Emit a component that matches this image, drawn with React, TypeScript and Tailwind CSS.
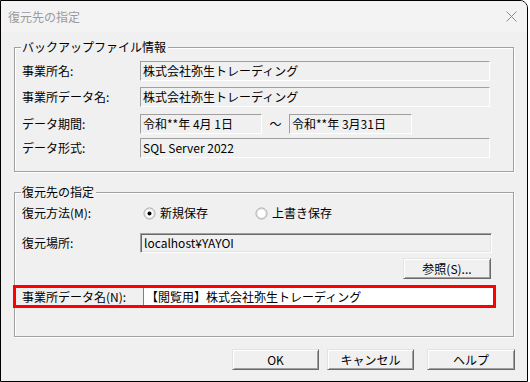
import React from 'react';

const sunkenThin =
  'bg-[#f0f0f0] border border-t-[#a0a0a0] border-l-[#a0a0a0] border-b-white border-r-white';

const ReadBox: React.FC<{ text: string; w: string }> = ({ text, w }) => (
  <div className={`${w} h-[20px] flex items-center pl-[2px] whitespace-nowrap ${sunkenThin}`}>{text}</div>
);

const Radio: React.FC<{ on?: boolean }> = ({ on }) => (
  <svg width="13" height="13" viewBox="0 0 13 13">
    <circle cx="6.5" cy="6.5" r="5.5" fill="#f7f7f7" stroke="#a0a0a0" />
    <circle cx="6.5" cy="6.5" r="4.5" fill="#fff" stroke="#e0e0e0" />
    {on && <circle cx="6.5" cy="6.5" r="2" fill="#000" />}
  </svg>
);

const Btn: React.FC<{ label: string; w: string }> = ({ label, w }) => (
  <button
    className={`${w} h-[21px] flex items-center justify-center bg-[#f0f0f0] border border-t-[#e3e3e3] border-l-[#e3e3e3] border-r-[#696969] border-b-[#696969] shadow-[inset_1px_1px_0_#fff,inset_-1px_-1px_0_#a0a0a0]`}
  >
    {label}
  </button>
);

const Row: React.FC<{ label: string; mt: string; children: React.ReactNode }> = ({ label, mt, children }) => (
  <div className={`flex items-center pl-[7px] ${mt}`}>
    <span className="w-[118px] whitespace-nowrap">{label}</span>
    {children}
  </div>
);

export default function App() {
  return (
    <div className="w-[530px] h-[382px] bg-white font-['MS_UI_Gothic','Noto_Sans_CJK_JP',sans-serif] text-[12px] leading-[14px] text-black">
      <div className="w-[528px] h-[382px] flex flex-col border border-black rounded-tr-[8px] bg-[#f0f0f0] overflow-hidden">
        {/* title bar */}
        <div className="h-[31px] flex items-center justify-between pl-[7px] pr-[10px] bg-[#f3f3f3]">
          <span className="text-[#9a9a9a]">復元先の指定</span>
          <svg width="11" height="11" viewBox="0 0 11 11">
            <path d="M0.5 0.5 L10.5 10.5 M10.5 0.5 L0.5 10.5" stroke="#8c8c8c" strokeWidth="1" />
          </svg>
        </div>

        {/* backup file info */}
        <fieldset className="mx-[13px] mt-[7px] pb-[13px] border border-[#a0a0a0] shadow-[inset_1px_1px_0_#fff,1px_1px_0_#fff]">
          <legend className="ml-[6px] pl-[1px] pr-[2px] leading-[16px] bg-[#f0f0f0]">バックアップファイル情報</legend>
          <Row label="事業所名:" mt="mt-[6px]">
            <ReadBox w="w-[350px]" text="株式会社弥生トレーディング" />
          </Row>
          <Row label="事業所データ名:" mt="mt-[6px]">
            <ReadBox w="w-[350px]" text="株式会社弥生トレーディング" />
          </Row>
          <Row label="データ期間:" mt="mt-[7px]">
            <ReadBox w="w-[122px]" text="令和**年 4月 1日" />
            <span className="w-[27px] text-center">～</span>
            <ReadBox w="w-[123px]" text="令和**年 3月31日" />
          </Row>
          <Row label="データ形式:" mt="mt-[4px]">
            <ReadBox w="w-[350px]" text="SQL Server 2022" />
          </Row>
        </fieldset>

        {/* restore target */}
        <fieldset className="mx-[13px] mt-[12px] pb-[28px] border border-[#a0a0a0] shadow-[inset_1px_1px_0_#fff,1px_1px_0_#fff]">
          <legend className="ml-[6px] pl-[1px] pr-[2px] leading-[16px] bg-[#f0f0f0]">復元先の指定</legend>
          <Row label="復元方法(M):" mt="mt-[3px]">
            <div className="h-[20px] w-[112px] ml-[3px] flex items-center gap-[4px]">
              <Radio on />
              <span>新規保存</span>
            </div>
            <div className="h-[20px] flex items-center gap-[4px]">
              <Radio />
              <span>上書き保存</span>
            </div>
          </Row>
          <Row label="復元場所:" mt="mt-[10px]">
            <div className="w-[352px] h-[20px] flex items-center pl-[3px] bg-[#f0f0f0] border border-t-[#a0a0a0] border-l-[#a0a0a0] border-b-white border-r-white shadow-[inset_1px_1px_0_#696969,inset_-1px_-1px_0_#e3e3e3]">
              localhost¥YAYOI
            </div>
          </Row>
          <div className="flex justify-end pr-[22px] mt-[5px]">
            <Btn w="w-[88px]" label="参照(S)..." />
          </div>
          <div className="-ml-[2px] mt-[6px] w-[483px] h-[23px] flex border-[3px] border-[#ff0000]">
            <span className="w-[127px] pl-[6px] flex items-center whitespace-nowrap">事業所データ名(N):</span>
            <div className="flex-1 flex items-center pl-[2px] bg-white border-l border-[#808080] whitespace-nowrap">
              【閲覧用】株式会社弥生トレーディング
            </div>
          </div>
        </fieldset>

        {/* dialog buttons */}
        <div className="flex justify-end pr-[12px] mt-[12px]">
          <Btn w="w-[87px]" label="OK" />
          <div className="w-[8px]" />
          <Btn w="w-[87px]" label="キャンセル" />
          <div className="w-[13px]" />
          <Btn w="w-[88px]" label="ヘルプ" />
        </div>
      </div>
    </div>
  );
}
